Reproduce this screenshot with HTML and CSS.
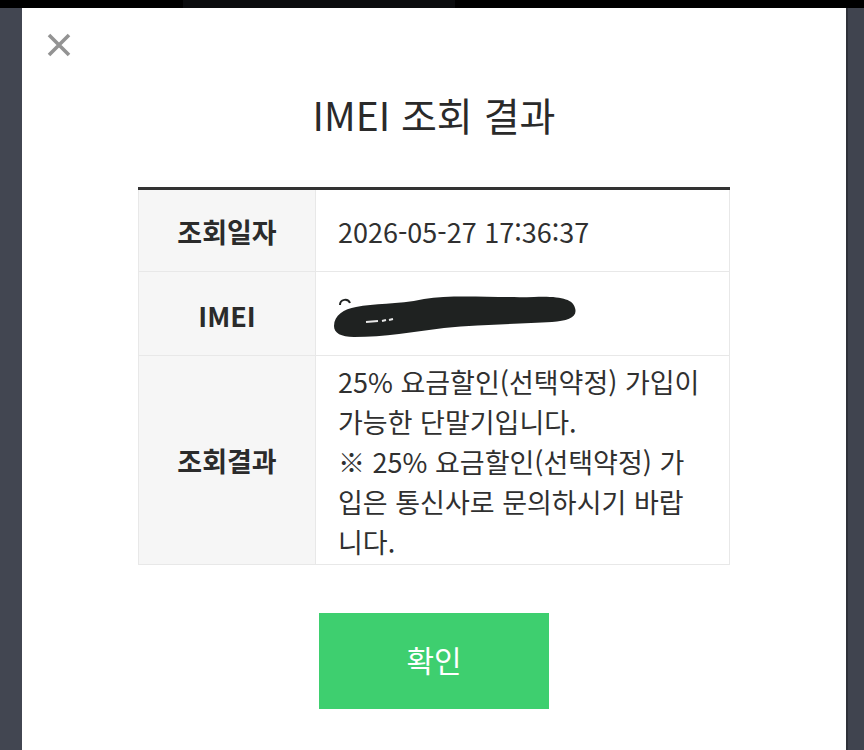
FILE: index.html
```html
<!DOCTYPE html>
<html lang="ko">
<head>
<meta charset="utf-8">
<title>IMEI 조회 결과</title>
<link rel="stylesheet" href="styles.css">
</head>
<body>
<div class="topbar"><div class="topbar-mid"></div></div>
<div class="stage">
  <div class="side side-left"></div>
  <div class="modal">
    <div class="modal-head">
      <button class="close" aria-label="닫기">
        <svg width="24" height="24" viewBox="0 0 24 24"><path d="M2 2 L22 22 M22 2 L2 22" stroke="#939393" stroke-width="3.6" fill="none"/></svg>
      </button>
    </div>
    <h1 class="title">IMEI 조회 결과</h1>
    <table class="result">
      <tr class="r1">
        <th>조회일자</th>
        <td>2026-05-27 17:36:37</td>
      </tr>
      <tr class="r2">
        <th>IMEI</th>
        <td class="imei">
          <svg class="redact" width="248" height="48" viewBox="0 0 248 48">
            <path d="M8 12 C8 6 16 5 18 10" stroke="#1f2221" stroke-width="2" fill="none"/>
            <path d="M2 33 C2 22 12 16 24 14 C42 10 64 12 92 6 C122 1 162 5 202 4 C228 3 241 6 243 15 C246 24 236 28 220 29 C190 31 150 31 112 35 C82 39 52 44 22 44 C9 44 2 40 2 33 Z" fill="#1f2221"/>
            <path d="M34 29 L46 28 M50 28 L54 27 M57 27 L61 26" stroke="#e8e8e8" stroke-width="2" fill="none"/>
          </svg>
        </td>
      </tr>
      <tr class="r3">
        <th>조회결과</th>
        <td class="msg">25% 요금할인(선택약정) 가입이<br>가능한 단말기입니다.<br>※ 25% 요금할인(선택약정) 가<br>입은 통신사로 문의하시기 바랍<br>니다.</td>
      </tr>
    </table>
    <div class="actions">
      <button class="ok">확인</button>
    </div>
  </div>
  <div class="side side-right"></div>
</div>
</body>
</html>
```
FILE: styles.css
```css
* { box-sizing: border-box; }
html, body { margin: 0; padding: 0; }
body {
  width: 864px;
  height: 750px;
  overflow: hidden;
  background: #40444f;
  font-family: "Noto Sans CJK KR", "Noto Sans", sans-serif;
  color: #2b2b2b;
}
.topbar {
  height: 8px;
  background: #000;
  display: flex;
}
.topbar-mid {
  margin-left: 183px;
  width: 272px;
  background: #0b0c0e;
}
.stage {
  display: flex;
  height: 742px;
}
.side { flex: none; }
.side-left { width: 22px; background: #424651; }
.side-right { width: 18px; background: #40444f; border-left: 2px solid #2e3139; }
.modal {
  width: 824px;
  height: 742px;
  background: #fff;
  display: flex;
  flex-direction: column;
  align-items: center;
}
.modal-head {
  align-self: stretch;
  padding: 25px 0 0 25px;
  height: 49px;
}
.close {
  display: block;
  border: 0;
  padding: 0;
  background: none;
  width: 24px;
  height: 24px;
}
.close svg { display: block; }
.title {
  margin: 33px 0 0;
  font-size: 39px;
  font-weight: 400;
  line-height: 48px;
  color: #2a2a2a;
  letter-spacing: 0;
}
.result {
  margin-top: 49px;
  width: 592px;
  border-collapse: collapse;
  border-top: 3px solid #333;
  font-size: 27px;
}
.result th, .result td {
  border: 1px solid #e8e8e8;
  border-top: 0;
}
.result tr + tr th, .result tr + tr td { border-top: 1px solid #e8e8e8; }
.result th {
  width: 177px;
  background: #f6f6f6;
  font-weight: 700;
  color: #2b2b2b;
  text-align: center;
  padding: 0;
}
.result td {
  background: #fff;
  padding: 0 0 0 22px;
  color: #303030;
  text-align: left;
  white-space: nowrap;
}
.r1 th, .r1 td { height: 83px; padding-top: 2px; }
.r2 th, .r2 td { height: 84px; padding-top: 3px; }
.result td.imei { padding-left: 16px; padding-top: 6px; }
.redact { display: block; }
.result td.msg {
  line-height: 40px;
  padding-top: 6px;
  padding-bottom: 2px;
}
.actions { margin-top: 48px; }
.ok {
  width: 230px;
  height: 96px;
  border: 0;
  background: #3ecf6f;
  color: #fff;
  font-family: "Noto Sans CJK KR", "Noto Sans", sans-serif;
  font-size: 30px;
  font-weight: 400;
  padding: 0 0 4px;
}
```
